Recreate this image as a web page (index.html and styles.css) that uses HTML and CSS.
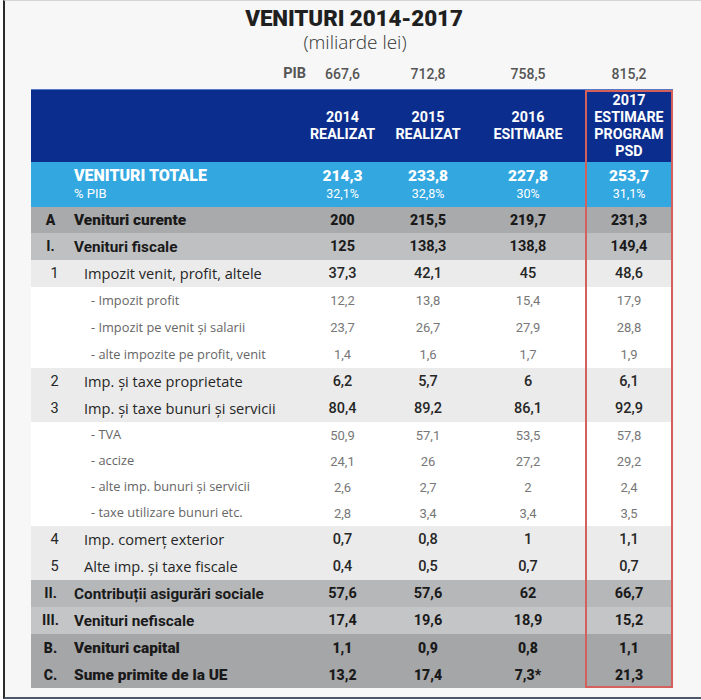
FILE: index.html
```html
<!DOCTYPE html>
<html lang="ro">
<head>
<meta charset="utf-8">
<title>Venituri 2014-2017</title>
<link rel="stylesheet" href="styles.css">
</head>
<body>
<div class="frame">
  <h1 class="title">VENITURI 2014-2017</h1>
  <p class="subtitle">(miliarde lei)</p>
  <table class="grid">
    <colgroup>
      <col class="c-idx"><col class="c-lbl"><col class="c-n1"><col class="c-n2"><col class="c-n3"><col class="c-n4">
    </colgroup>
    <tbody>
      <tr class="pib">
        <td></td><td class="pib-lbl"><span>PIB</span></td><td>667,6</td><td>712,8</td><td>758,5</td><td>815,2</td>
      </tr>
      <tr class="head">
        <td></td><td></td>
        <td>2014<br>REALIZAT</td>
        <td>2015<br>REALIZAT</td>
        <td>2016<br>ESITMARE</td>
        <td class="hl hl-top">2017<br>ESTIMARE<br>PROGRAM<br>PSD</td>
      </tr>
      <tr class="total">
        <td></td>
        <td class="lbl"><span class="big">VENITURI TOTALE</span><span class="small">% PIB</span></td>
        <td><span class="big">214,3</span><span class="small">32,1%</span></td>
        <td><span class="big">233,8</span><span class="small">32,8%</span></td>
        <td><span class="big">227,8</span><span class="small">30%</span></td>
        <td class="hl"><span class="big">253,7</span><span class="small">31,1%</span></td>
      </tr>
      <tr class="r-a first">
        <td class="idx">A</td><td class="lbl">Venituri curente</td><td>200</td><td>215,5</td><td>219,7</td><td class="hl">231,3</td>
      </tr>
      <tr class="r-i">
        <td class="idx">I.</td><td class="lbl">Venituri fiscale</td><td>125</td><td>138,3</td><td>138,8</td><td class="hl">149,4</td>
      </tr>
      <tr class="r-l2">
        <td class="idx">1</td><td class="lbl">Impozit venit, profit, altele</td><td>37,3</td><td>42,1</td><td>45</td><td class="hl">48,6</td>
      </tr>
      <tr class="r-sub">
        <td></td><td class="lbl">- Impozit profit</td><td>12,2</td><td>13,8</td><td>15,4</td><td class="hl">17,9</td>
      </tr>
      <tr class="r-sub">
        <td></td><td class="lbl">- Impozit pe venit și salarii</td><td>23,7</td><td>26,7</td><td>27,9</td><td class="hl">28,8</td>
      </tr>
      <tr class="r-sub">
        <td></td><td class="lbl">- alte impozite pe profit, venit</td><td>1,4</td><td>1,6</td><td>1,7</td><td class="hl">1,9</td>
      </tr>
      <tr class="r-l2">
        <td class="idx">2</td><td class="lbl">Imp. și taxe proprietate</td><td>6,2</td><td>5,7</td><td>6</td><td class="hl">6,1</td>
      </tr>
      <tr class="r-l2">
        <td class="idx">3</td><td class="lbl">Imp. și taxe bunuri și servicii</td><td>80,4</td><td>89,2</td><td>86,1</td><td class="hl">92,9</td>
      </tr>
      <tr class="r-sub tight">
        <td></td><td class="lbl">- TVA</td><td>50,9</td><td>57,1</td><td>53,5</td><td class="hl">57,8</td>
      </tr>
      <tr class="r-sub tight">
        <td></td><td class="lbl">- accize</td><td>24,1</td><td>26</td><td>27,2</td><td class="hl">29,2</td>
      </tr>
      <tr class="r-sub tight">
        <td></td><td class="lbl">- alte imp. bunuri și servicii</td><td>2,6</td><td>2,7</td><td>2</td><td class="hl">2,4</td>
      </tr>
      <tr class="r-sub tight">
        <td></td><td class="lbl">- taxe utilizare bunuri etc.</td><td>2,8</td><td>3,4</td><td>3,4</td><td class="hl">3,5</td>
      </tr>
      <tr class="r-l2">
        <td class="idx">4</td><td class="lbl">Imp. comerț exterior</td><td>0,7</td><td>0,8</td><td>1</td><td class="hl">1,1</td>
      </tr>
      <tr class="r-l2">
        <td class="idx">5</td><td class="lbl">Alte imp. și taxe fiscale</td><td>0,4</td><td>0,5</td><td>0,7</td><td class="hl">0,7</td>
      </tr>
      <tr class="r-ii">
        <td class="idx">II.</td><td class="lbl">Contribuții asigurări sociale</td><td>57,6</td><td>57,6</td><td>62</td><td class="hl">66,7</td>
      </tr>
      <tr class="r-iii">
        <td class="idx">III.</td><td class="lbl">Venituri nefiscale</td><td>17,4</td><td>19,6</td><td>18,9</td><td class="hl">15,2</td>
      </tr>
      <tr class="r-b">
        <td class="idx">B.</td><td class="lbl">Venituri capital</td><td>1,1</td><td>0,9</td><td>0,8</td><td class="hl">1,1</td>
      </tr>
      <tr class="r-b">
        <td class="idx">C.</td><td class="lbl">Sume primite de la UE</td><td>13,2</td><td>17,4</td><td>7,3*</td><td class="hl hl-bottom">21,3</td>
      </tr>
    </tbody>
  </table>
</div>
</body>
</html>
```
FILE: styles.css
```css
html, body {
  margin: 0;
  padding: 0;
  background: #ffffff;
}

.frame {
  margin-left: 3px;
  height: 696px;
  background: #f7f7f7;
  border-left: 2px solid #2b2b2b;
  border-top: 1px solid #d4d4d4;
  border-bottom: 2px solid #4c5868;
  font-family: Roboto, "Liberation Sans", sans-serif;
  overflow: hidden;
}

.title {
  margin: 4px 0 0;
  font-family: Roboto, sans-serif;
  font-weight: 900;
  font-size: 22.4px;
  line-height: 26px;
  text-align: center;
  color: #1f1f1f;
  padding-left: 2px;
  letter-spacing: -0.1px;
}

.subtitle {
  margin: 0;
  font-family: "Open Sans", Roboto, sans-serif;
  font-weight: 300;
  font-size: 19px;
  line-height: 22px;
  text-align: center;
  color: #333;
  padding-left: 4px;
}

.grid {
  margin: 8px 0 0 26px;
  width: 642px;
  table-layout: fixed;
  border-collapse: separate;
  border-spacing: 0;
}

.c-idx { width: 39px; }
.c-lbl { width: 230px; }
.c-n1 { width: 85px; }
.c-n2 { width: 86px; }
.c-n3 { width: 114px; }
.c-n4 { width: 88px; }

.grid td {
  padding: 0;
  text-align: center;
  vertical-align: middle;
  white-space: nowrap;
}

.grid td.lbl {
  text-align: left;
  padding-left: 4px;
}

/* PIB row */
.pib td {
  height: 25px;
  padding-bottom: 3px;
  font-size: 14px;
  font-weight: 500;
  color: #555;
}
.pib td.pib-lbl {
  text-align: right;
  padding-right: 0;
  font-weight: 700;
  font-size: 14.5px;
}
.pib-lbl span {
  margin-right: -6px;
}

/* header */
.head td {
  height: 72px;
  background: #0b2d8d;
  color: #fff;
  font-weight: 700;
  font-size: 14.3px;
  line-height: 17px;
  border-top: 1px solid #5a78c8;
}

.total td {
  height: 45px;
  background: #33a7df;
  color: #fff;
}
.total .big {
  display: block;
  font-weight: 900;
  font-size: 15.5px;
  line-height: 18px;
}
.total td.lbl .big {
  font-size: 16px;
}
.total .small {
  display: block;
  font-weight: 400;
  font-size: 12.5px;
  line-height: 16px;
  margin-top: 1px;
}
.total td.lbl .small {
  font-size: 13px;
}

/* body rows */
.grid tr.r-a td,
.grid tr.r-i td,
.grid tr.r-l2 td,
.grid tr.r-sub td,
.grid tr.r-ii td,
.grid tr.r-iii td,
.grid tr.r-b td {
  height: 27px;
}
.grid tr.first td { height: 26px; }
.grid tr.r-sub.tight td { height: 26px; }

.r-a td { background: #a9aaac; font-weight: 900; font-size: 14px; color: #1a1a1a; }
.r-i td { background: #bfc0c2; font-weight: 700; font-size: 14.5px; color: #1a1a1a; }
.r-l2 td { background: #ebebeb; font-weight: 400; font-size: 14.5px; color: #262626; }
.r-sub td { background: #ffffff; font-weight: 400; font-size: 13px; color: #777; }
.r-ii td { background: #b6b7b9; font-weight: 700; font-size: 14.5px; color: #1a1a1a; }
.r-iii td { background: #c4c5c7; font-weight: 700; font-size: 14.5px; color: #1a1a1a; }
.r-b td { background: #a5a6a8; font-weight: 900; font-size: 14px; color: #1a1a1a; }

.r-a td.lbl, .r-b td.lbl { font-size: 15.4px; }
.r-i td.lbl, .r-ii td.lbl, .r-iii td.lbl { font-size: 15.3px; }

.grid tr.r-l2 td.lbl {
  padding-left: 14px;
  font-family: "Open Sans", Roboto, sans-serif;
  font-size: 14.6px;
  line-height: 18px;
  height: 25px;
  padding-bottom: 2px;
}
.grid tr.r-sub td.lbl {
  padding-left: 21px;
  color: #666;
  font-family: "Open Sans", Roboto, sans-serif;
  font-size: 12.8px;
  line-height: 16px;
  height: 25px;
  padding-bottom: 2px;
}
.grid tr.r-sub.tight td.lbl { height: 24px; }
.r-l2 td.idx { padding-left: 8px; }

.r-l2 td:not(.lbl):not(.idx) { font-weight: 500; }

/* highlighted 2017 column */
.grid td.hl {
  box-shadow: inset 2px 0 #d4605b, inset -2px 0 #d4605b;
}
.grid td.hl.hl-top {
  box-shadow: inset 2px 0 #d4605b, inset -2px 0 #d4605b, inset 0 2px #d4605b;
}
.grid td.hl.hl-bottom {
  box-shadow: inset 2px 0 #d4605b, inset -2px 0 #d4605b, inset 0 -2px #d4605b;
}
```
